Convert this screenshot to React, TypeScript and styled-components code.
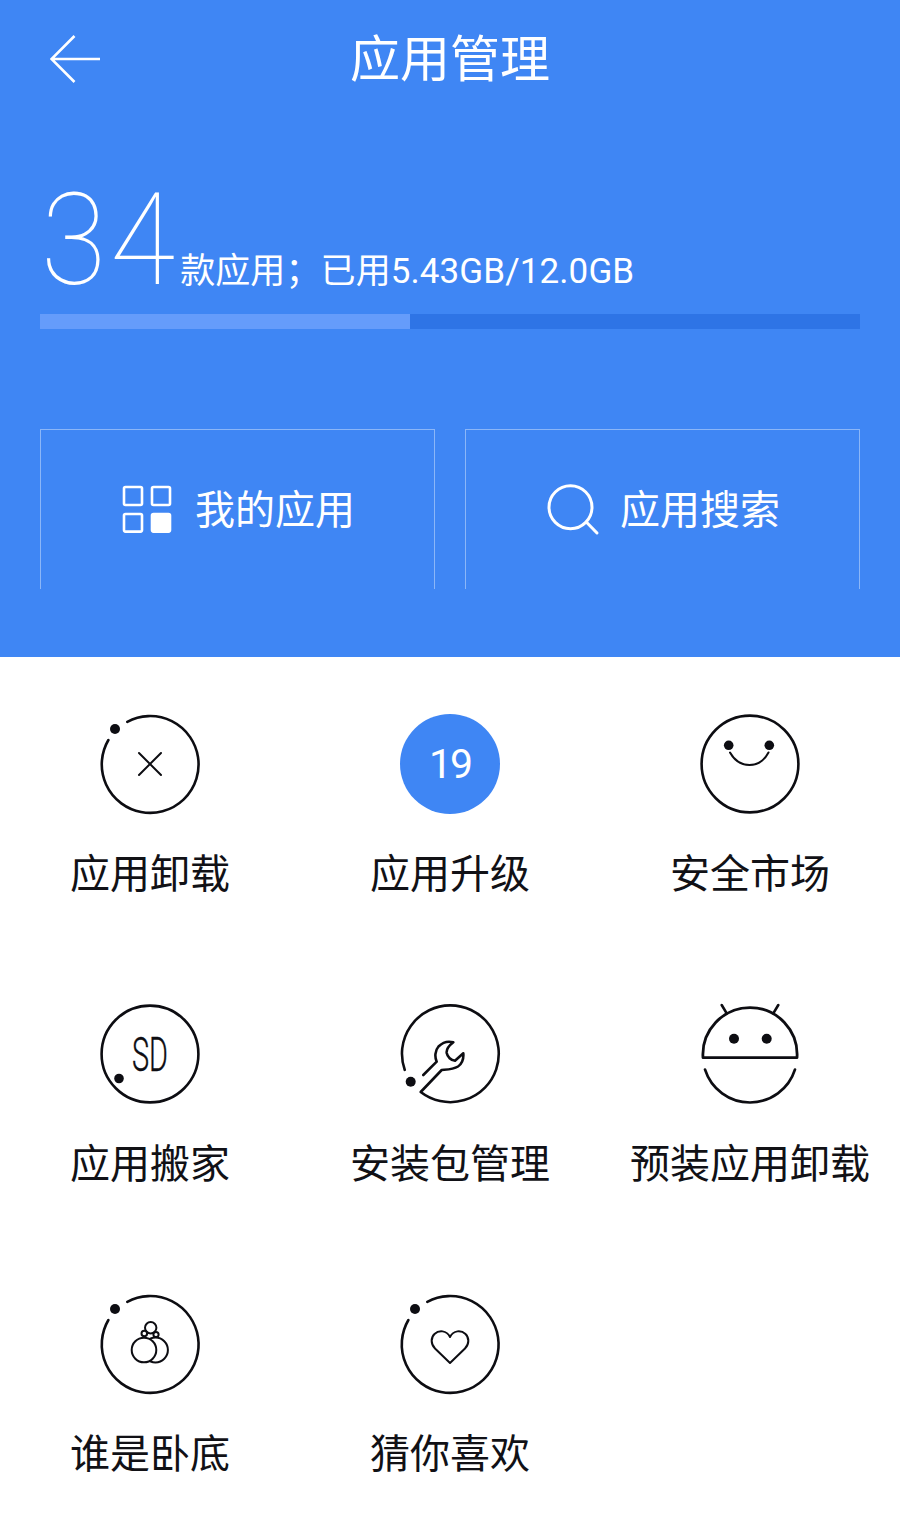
import React from 'react';
import styled, { createGlobalStyle } from 'styled-components';

const GlobalStyle = createGlobalStyle`
  html, body {
    margin: 0;
    padding: 0;
    background: #ffffff;
  }
  body {
    font-family: "Noto Sans CJK SC", "Noto Sans", Roboto, sans-serif;
  }
`;

const Page = styled.div`
  width: 900px;
  height: 1527px;
  overflow: hidden;
  background: #ffffff;
`;

const Hero = styled.header`
  height: 657px;
  box-sizing: border-box;
  padding: 0 40px;
  background: #3f86f4;
  color: #ffffff;
`;

const NavBar = styled.div`
  height: 116px;
  display: grid;
  grid-template-columns: 1fr auto 1fr;
  align-items: center;
`;

const BackIcon = styled.svg`
  width: 52px;
  height: 48px;
  margin: 2px 0 0 10px;
  display: block;
`;

const Title = styled.h1`
  margin: 0 0 7px;
  font-size: 50px;
  line-height: 60px;
  font-weight: 400;
`;

const StatRow = styled.div`
  height: 198px;
  box-sizing: border-box;
  padding: 0 0 19px 1px;
  display: flex;
  align-items: flex-end;
`;

const BigCount = styled.span`
  font-family: Roboto, sans-serif;
  font-weight: 100;
  font-size: 128px;
  line-height: 110px;
  letter-spacing: 4px;
  transform: scaleX(0.93);
  transform-origin: left center;
`;

const StatText = styled.span`
  font-family: Roboto, "Noto Sans CJK SC", sans-serif;
  font-size: 35px;
  line-height: 40px;
  letter-spacing: 0.1px;
  margin-left: -9px;
  transform: translateY(-3px);
`;

const Track = styled.div`
  height: 15px;
  background: #2e74e6;
`;

const TrackFill = styled.div`
  height: 100%;
  background: #659cfb;
`;

const Actions = styled.div`
  margin-top: 100px;
  display: grid;
  grid-template-columns: 395px 395px;
  gap: 30px;
`;

const ActionCard = styled.div`
  height: 160px;
  box-sizing: border-box;
  border: 1px solid rgba(255, 255, 255, 0.4);
  border-bottom: none;
  display: flex;
  align-items: center;
  justify-content: center;
  gap: 23px;
  padding-bottom: 6px;
  font-size: 40px;
`;

const ActionIcon = styled.svg`
  width: 52px;
  height: 52px;
  display: block;
  flex: none;
  overflow: visible;
`;

const FeatureGrid = styled.main`
  display: grid;
  grid-template-columns: repeat(3, 300px);
  grid-auto-rows: 290px;
  padding-top: 57px;
`;

const Feature = styled.div`
  display: flex;
  flex-direction: column;
  align-items: center;
`;

const FeatureIcon = styled.svg`
  width: 100px;
  height: 100px;
  display: block;
  overflow: visible;
  fill: none;
  stroke: #0d0d12;
  stroke-width: 2.6;
  stroke-linecap: round;
  stroke-linejoin: round;
`;

const Dot = styled.circle`
  fill: #0d0d12;
  stroke: none;
`;

const Thin = styled.g`
  stroke-width: 2;
`;

const Badge = styled.div`
  width: 100px;
  height: 100px;
  border-radius: 50%;
  background: #3f86f4;
  color: #ffffff;
  display: flex;
  align-items: center;
  justify-content: center;
  font-family: Roboto, sans-serif;
  font-size: 41px;
  letter-spacing: -2px;
  line-height: 100px;
`;

const FeatureLabel = styled.div`
  margin-top: 33px;
  font-size: 40px;
  line-height: 48px;
  color: #111116;
  white-space: nowrap;
`;

const SdText = styled.text`
  font-family: Roboto, sans-serif;
  font-weight: 300;
  font-size: 48px;
  fill: #0d0d12;
  stroke: #0d0d12;
  stroke-width: 0.4;
`;

const OrbitArc = () => (
  <>
    <path d="M27.3 7.8A48.4 48.4 0 1 1 8.4 26" />
    <Dot cx="15" cy="15" r="5" />
  </>
);

const UninstallIcon = () => (
  <FeatureIcon viewBox="0 0 100 100">
    <OrbitArc />
    <Thin>
      <path d="M39 39L61 61M61 39L39 61" />
    </Thin>
  </FeatureIcon>
);

const SmileIcon = () => (
  <FeatureIcon viewBox="0 0 100 100">
    <circle cx="50" cy="50" r="48.4" />
    <Dot cx="28.7" cy="31.3" r="4.8" />
    <Dot cx="69.3" cy="31.3" r="4.8" />
    <Thin>
      <path d="M30 38.5Q37 51 49.5 51Q62 51 68.5 38.5" />
    </Thin>
  </FeatureIcon>
);

const SdIcon = () => (
  <FeatureIcon viewBox="0 0 100 100">
    <circle cx="50" cy="50" r="48.4" />
    <SdText x="32" y="67" textLength="36" lengthAdjust="spacingAndGlyphs">SD</SdText>
    <Dot cx="19" cy="74.5" r="4.8" />
  </FeatureIcon>
);

const WrenchIcon = () => (
  <FeatureIcon viewBox="0 0 100 100">
    <path d="M4.7 65.8A48.4 48.4 0 1 1 20.7 88L41.7 66C47 65.5 53 65.5 58 62.5C62.5 59.5 63.7 54 63.3 49.3L55 56.7C51 56.5 47.5 53 46.7 49C46.3 46 48.5 42 53.3 38.3C48 36.8 42.5 38.5 38.5 42.5C35 46.5 34.5 53 36.7 57.7L23.3 71" />
    <Dot cx="10.7" cy="77.7" r="5" />
  </FeatureIcon>
);

const AndroidIcon = () => (
  <FeatureIcon viewBox="0 0 100 100">
    <path d="M3 53.7A47.1 47.1 0 1 1 97 53.7Z" strokeLinecap="butt" strokeWidth="2.8" />
    <path d="M21.7 1L26.7 9.3M78.3 1L73.3 9.3" />
    <Dot cx="34" cy="34.7" r="5" />
    <Dot cx="66.7" cy="34.7" r="5" />
    <path d="M5 65.5A47.2 47.2 0 0 0 95 65.5" />
  </FeatureIcon>
);

const NutsIcon = () => (
  <FeatureIcon viewBox="0 0 100 100">
    <OrbitArc />
    <Thin fill="#ffffff">
      <circle cx="50.7" cy="33.7" r="5.7" />
      <circle cx="44.3" cy="39.5" r="2.8" />
      <circle cx="56" cy="40.5" r="2.6" />
      <circle cx="55.5" cy="56" r="12.4" />
      <circle cx="44" cy="56" r="12.3" />
    </Thin>
  </FeatureIcon>
);

const HeartIcon = () => (
  <FeatureIcon viewBox="0 0 100 100">
    <OrbitArc />
    <Thin>
      <path d="M50 69L35 54.5C30.5 50 30.8 43.5 34.5 40C38.8 36 46.5 36 50 43C53.5 36 61.2 36 65.5 40C69.2 43.5 69.5 50 65 54.5Z" />
    </Thin>
  </FeatureIcon>
);

const features = [
  { label: '应用卸载', icon: <UninstallIcon /> },
  { label: '应用升级', icon: <Badge>19</Badge> },
  { label: '安全市场', icon: <SmileIcon /> },
  { label: '应用搬家', icon: <SdIcon /> },
  { label: '安装包管理', icon: <WrenchIcon /> },
  { label: '预装应用卸载', icon: <AndroidIcon /> },
  { label: '谁是卧底', icon: <NutsIcon /> },
  { label: '猜你喜欢', icon: <HeartIcon /> },
];

export default function App() {
  return (
    <Page>
      <GlobalStyle />
      <Hero>
        <NavBar>
          <BackIcon viewBox="0 0 52 48" fill="none" stroke="#ffffff" strokeWidth="2.6">
            <path d="M24.5 1L1.5 24L24.5 47M1.5 24H50" />
          </BackIcon>
          <Title>应用管理</Title>
          <span />
        </NavBar>
        <StatRow>
          <BigCount>34</BigCount>
          <StatText>款应用；已用5.43GB/12.0GB</StatText>
        </StatRow>
        <Track>
          <TrackFill style={{ width: `${(370 / 820) * 100}%` }} />
        </Track>
        <Actions>
          <ActionCard>
            <ActionIcon viewBox="0 0 52 52" fill="none" stroke="#ffffff" strokeWidth="2.6">
              <rect x="4" y="6" width="18" height="18" rx="1.5" />
              <rect x="32" y="6" width="18" height="18" rx="1.5" />
              <rect x="4" y="33" width="18" height="17.6" rx="1.5" />
              <rect x="32" y="33" width="18" height="17.6" rx="1.5" fill="#ffffff" />
            </ActionIcon>
            我的应用
          </ActionCard>
          <ActionCard>
            <ActionIcon viewBox="0 0 52 52" fill="none" stroke="#ffffff" strokeWidth="3" strokeLinecap="round">
              <circle cx="25.5" cy="26.2" r="21.5" />
              <path d="M41.5 41.2L52 52" />
            </ActionIcon>
            应用搜索
          </ActionCard>
        </Actions>
      </Hero>
      <FeatureGrid>
        {features.map(feature => (
          <Feature key={feature.label}>
            {feature.icon}
            <FeatureLabel>{feature.label}</FeatureLabel>
          </Feature>
        ))}
      </FeatureGrid>
    </Page>
  );
}
